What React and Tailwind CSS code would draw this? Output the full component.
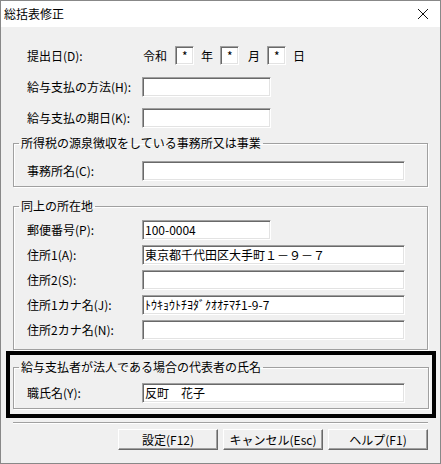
import React from "react";

const font = { fontFamily: '"Noto Sans CJK JP", "Noto Sans", sans-serif' };

const Field = ({ value = "", wide, className = "" }) => (
  <div
    className={`h-5 ${wide ? "w-[263px]" : "w-[129px]"} bg-white border border-t-[#a0a0a0] border-l-[#a0a0a0] border-r-white border-b-white shadow-[inset_1px_1px_0_#696969,inset_-1px_-1px_0_#e3e3e3] pl-[2px] text-[12px] leading-[17px] text-black whitespace-nowrap overflow-hidden ${className}`}
  >
    {value}
  </div>
);

const DateBox = () => (
  <div className="h-[19px] w-[19px] bg-white border border-t-[#a0a0a0] border-l-[#a0a0a0] border-r-white border-b-white shadow-[inset_1px_1px_0_#696969,inset_-1px_-1px_0_#e3e3e3] pl-[6px] text-[12px] leading-[17px]">
    *
  </div>
);

const Row = ({ label, children, className = "" }) => (
  <div className={`flex items-center h-5 ${className}`}>
    <div className="w-[115px] text-[12px] leading-[14px] whitespace-nowrap">{label}</div>
    {children}
  </div>
);

const Group = ({ title, children, className = "" }) => (
  <fieldset
    className={`border border-[#a0a0a0] shadow-[inset_1px_1px_0_#fff,1px_1px_0_#fff] pl-[13px] ${className}`}
  >
    <legend className="-ml-[8px] px-[2px] text-[12px] leading-[14px] whitespace-nowrap">
      {title}
    </legend>
    {children}
  </fieldset>
);

const Button = ({ children }) => (
  <button className="w-[100px] h-[21px] bg-[#f0f0f0] border border-t-white border-l-white border-r-[#696969] border-b-[#696969] shadow-[inset_-1px_-1px_0_#a0a0a0] text-[12px] leading-[14px] text-black">
    {children}
  </button>
);

export default function App() {
  return (
    <div
      className="w-[441px] h-[464px] bg-[#f0f0f0] border border-[#888888] flex flex-col text-black"
      style={font}
    >
      {/* title bar */}
      <div className="h-[26px] bg-white flex items-center justify-between pl-[3px] pr-[8px]">
        <span className="text-[12px] leading-[14px]">総括表修正</span>
        <svg width="12" height="12" viewBox="0 0 12 12" className="mr-[3px]">
          <path d="M1 1 L11 11 M11 1 L1 11" stroke="#111" strokeWidth="1" />
        </svg>
      </div>

      <div className="flex flex-col">
        <div className="pl-[26px] flex flex-col">
          <div className="flex items-center h-[19px] mt-[19px] text-[12px] leading-[14px]">
            <div className="w-[116px] whitespace-nowrap">提出日(D):</div>
            <span className="mr-[8px]">令和</span>
            <DateBox />
            <span className="ml-[7px] mr-[7px]">年</span>
            <DateBox />
            <span className="ml-[9px] mr-[7px]">月</span>
            <DateBox />
            <span className="ml-[7px]">日</span>
          </div>
          <Row label="給与支払の方法(H):" className="mt-[12px]">
            <Field />
          </Row>
          <Row label="給与支払の期日(K):" className="mt-[11px]">
            <Field />
          </Row>
        </div>

        <Group title="所得税の源泉徴収をしている事務所又は事業" className="mx-[12px] mt-[8px] pb-[5px]">
          <Row label="事務所名(C):" className="mt-[11px]">
            <Field wide />
          </Row>
        </Group>

        <Group title="同上の所在地" className="mx-[12px] mt-[12px] pb-[9px]">
          <div className="flex flex-col gap-[5px] mt-[7px]">
            <Row label="郵便番号(P):">
              <Field value="100-0004" />
            </Row>
            <Row label="住所1(A):">
              <Field wide value="東京都千代田区大手町１－９－７" />
            </Row>
            <Row label="住所2(S):">
              <Field wide />
            </Row>
            <Row label="住所1カナ名(J):">
              <Field wide value="ﾄｳｷｮｳﾄﾁﾖﾀﾞｸｵｵﾃﾏﾁ1-9-7" />
            </Row>
            <Row label="住所2カナ名(N):">
              <Field wide />
            </Row>
          </div>
        </Group>

        <div className="ml-[5px] mr-[4px] mt-[1px] border-4 border-black pt-[5px] pb-[5px] px-[3px]">
          <Group title="給与支払者が法人である場合の代表者の氏名" className="pb-[5px]">
            <Row label="職氏名(Y):" className="mt-[9px]">
              <Field wide value="反町　花子" />
            </Row>
          </Group>
        </div>

        <div className="mx-[12px] mt-[4px] h-[2px] border-t border-[#a0a0a0] border-b border-b-white" />

        <div className="flex justify-end gap-[5px] pr-[12px] mt-[5px]">
          <Button>設定(F12)</Button>
          <Button>キャンセル(Esc)</Button>
          <Button>ヘルプ(F1)</Button>
        </div>
      </div>
    </div>
  );
}
